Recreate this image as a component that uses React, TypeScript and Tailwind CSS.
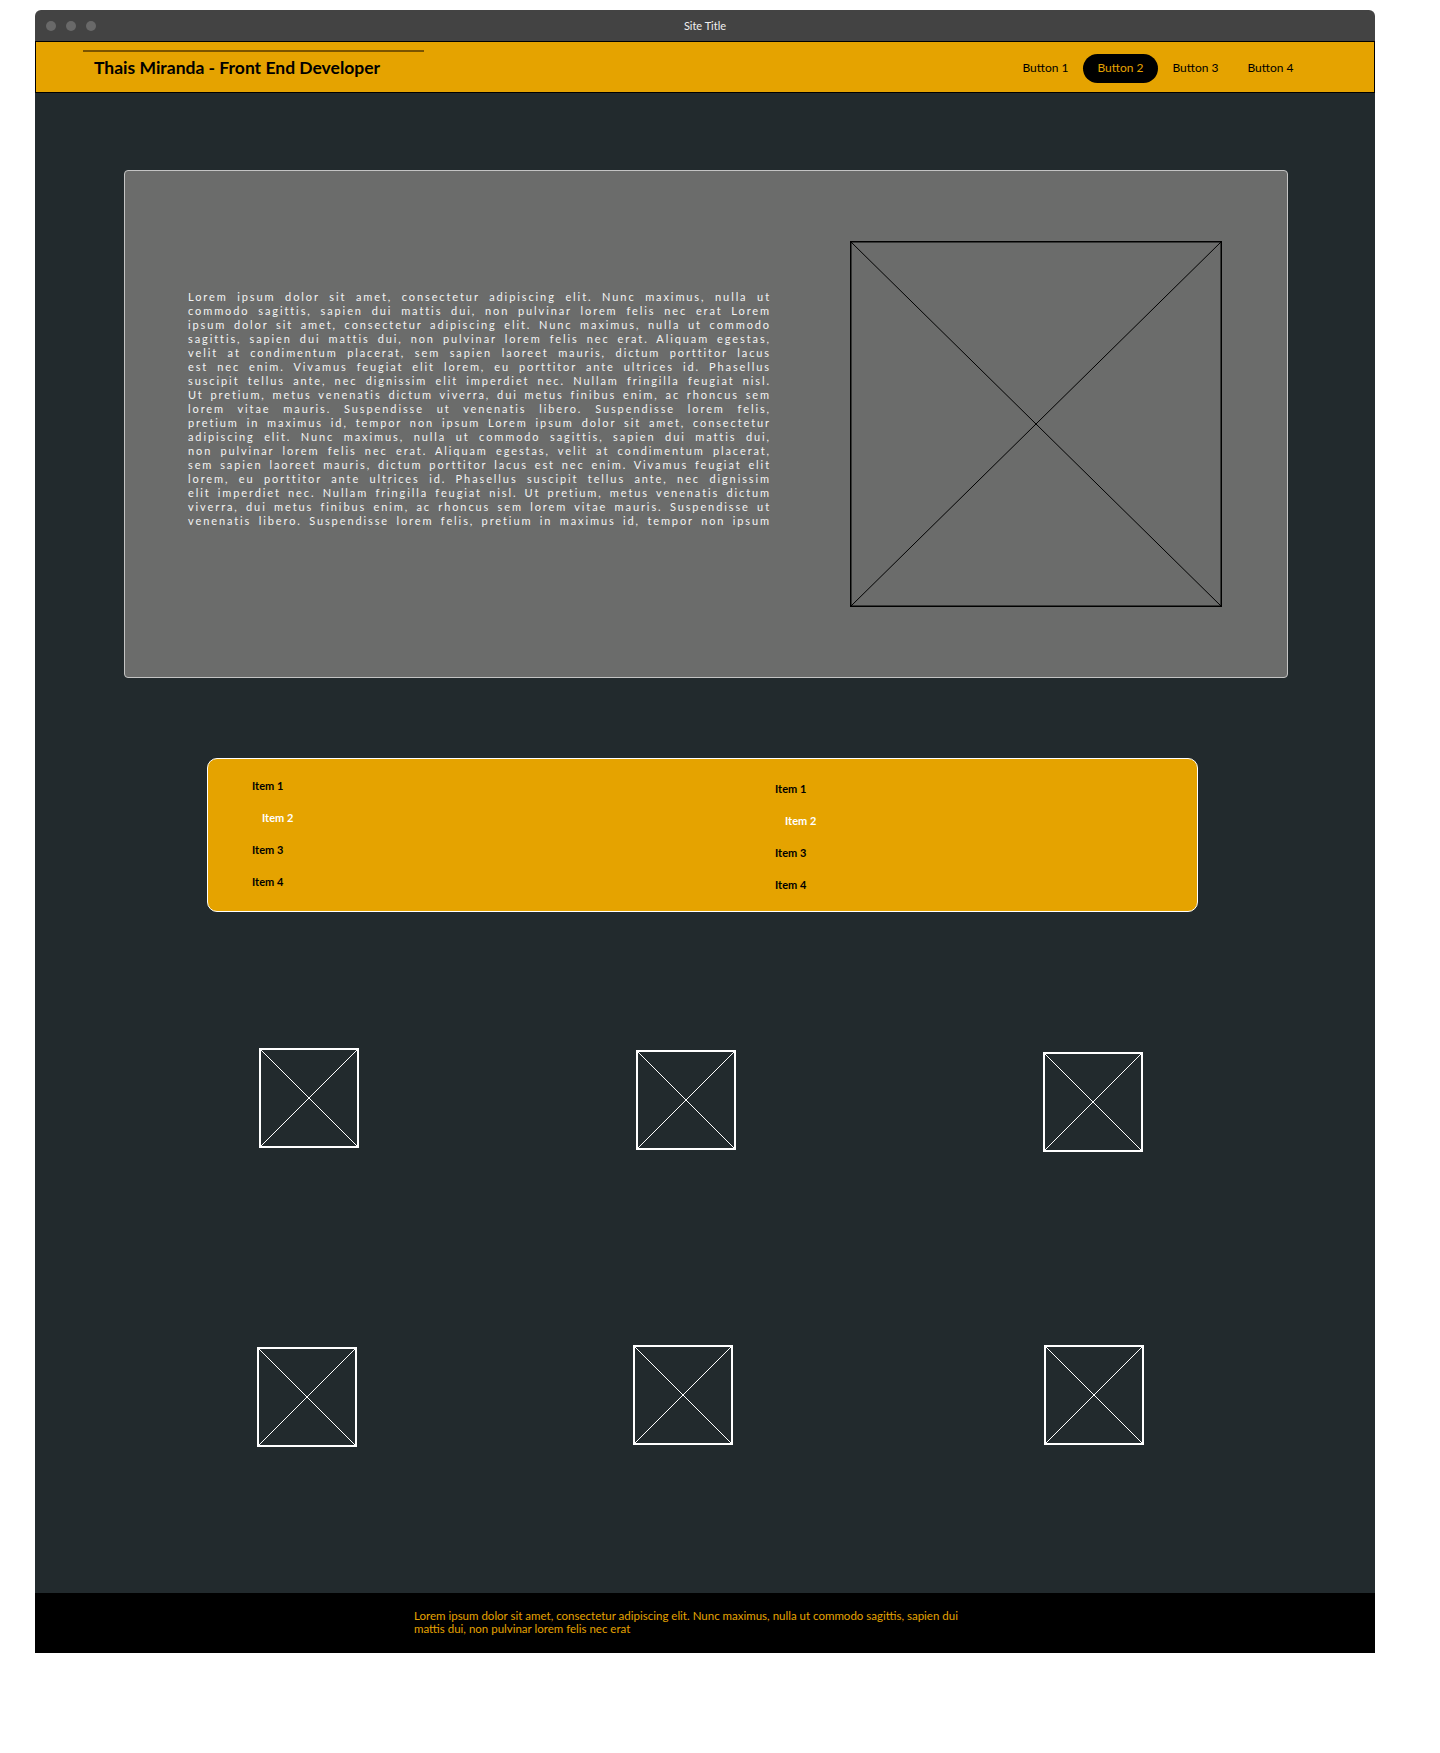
import React from 'react';

const heroLines = [
  "Lorem ipsum dolor sit amet, consectetur adipiscing elit. Nunc maximus, nulla ut",
  "commodo sagittis, sapien dui mattis dui, non pulvinar lorem felis nec erat Lorem",
  "ipsum dolor sit amet, consectetur adipiscing elit. Nunc maximus, nulla ut commodo",
  "sagittis, sapien dui mattis dui, non pulvinar lorem felis nec erat. Aliquam egestas,",
  "velit at condimentum placerat, sem sapien laoreet mauris, dictum porttitor lacus",
  "est nec enim. Vivamus feugiat elit lorem, eu porttitor ante ultrices id. Phasellus",
  "suscipit tellus ante, nec dignissim elit imperdiet nec. Nullam fringilla feugiat nisl.",
  "Ut pretium, metus venenatis dictum viverra, dui metus finibus enim, ac rhoncus sem",
  "lorem vitae mauris. Suspendisse ut venenatis libero. Suspendisse lorem felis,",
  "pretium in maximus id, tempor non ipsum Lorem ipsum dolor sit amet, consectetur",
  "adipiscing elit. Nunc maximus, nulla ut commodo sagittis, sapien dui mattis dui,",
  "non pulvinar lorem felis nec erat. Aliquam egestas, velit at condimentum placerat,",
  "sem sapien laoreet mauris, dictum porttitor lacus est nec enim. Vivamus feugiat elit",
  "lorem, eu porttitor ante ultrices id. Phasellus suscipit tellus ante, nec dignissim",
  "elit imperdiet nec. Nullam fringilla feugiat nisl. Ut pretium, metus venenatis dictum",
  "viverra, dui metus finibus enim, ac rhoncus sem lorem vitae mauris. Suspendisse ut",
  "venenatis libero. Suspendisse lorem felis, pretium in maximus id, tempor non ipsum",
];

const navButtons = ["Button 1", "Button 2", "Button 3", "Button 4"];
const items = ["Item 1", "Item 2", "Item 3", "Item 4"];

const Placeholder = ({ w, h, color, rectStroke, lineStroke }: { w: number; h: number; color: string; rectStroke: number; lineStroke: number }) => (
  <svg width={w} height={h} viewBox={`0 0 ${w} ${h}`} className="block shrink-0">
    <rect x={rectStroke / 2} y={rectStroke / 2} width={w - rectStroke} height={h - rectStroke} fill="none" stroke={color} strokeWidth={rectStroke} />
    <line x1={0} y1={0} x2={w} y2={h} stroke={color} strokeWidth={lineStroke} />
    <line x1={w} y1={0} x2={0} y2={h} stroke={color} strokeWidth={lineStroke} />
  </svg>
);

const ItemColumn = () => (
  <>
    {items.map((item, i) => (
      <div key={item} className={`h-[32px] flex items-center text-[11px] font-bold ${i === 1 ? 'pl-[10px] text-white' : 'text-black'}`}>
        {item}
      </div>
    ))}
  </>
);

const App = () => {
  return (
    <div className="bg-white min-h-[1753px] pt-[10px] pl-[35px] font-['Lato','Noto_Sans',sans-serif]">
      <div className="w-[1340px] rounded-t-[6px] overflow-hidden">
        {/* title bar */}
        <div className="h-[31px] bg-[#434343] grid grid-cols-[1fr_auto_1fr] items-center">
          <div className="flex items-center gap-[10px] pl-[11px]">
            <span className="w-[10px] h-[10px] rounded-full bg-[#696969]" />
            <span className="w-[10px] h-[10px] rounded-full bg-[#696969]" />
            <span className="w-[10px] h-[10px] rounded-full bg-[#696969]" />
          </div>
          <div className="text-[11px] text-[#f0f0f0] pt-[1px]">Site Title</div>
          <div />
        </div>

        {/* nav */}
        <div className="h-[52px] bg-[#e5a300] border border-black flex justify-between">
          <div className="pl-[47px] pt-[8px]">
            <div className="w-[341px] border-t-2 border-[#7a5400] pl-[11px] pt-[4px] text-[17.5px] leading-[24px] font-bold text-black">
              Thais Miranda - Front End Developer
            </div>
          </div>
          <div className="flex items-center pr-[66px] pt-[2px]">
            {navButtons.map((b, i) => (
              <button
                key={b}
                className={`w-[75px] h-[29px] rounded-full text-[12px] ${i === 1 ? 'bg-black text-[#e5a300]' : 'text-black'}`}
              >
                {b}
              </button>
            ))}
          </div>
        </div>

        {/* main */}
        <div className="h-[1500px] bg-[#222a2d] pt-[77px]">
          <div className="ml-[89px] w-[1164px] h-[508px] bg-[#6b6c6b] border border-[#c4c4c4] rounded-[4px] flex items-start">
            <div className="ml-[63px] mt-[119px] w-[583px] text-[11px] leading-[14px] tracking-[1.9px] text-[#f4f4f4]">
              {heroLines.map((line, i) => (
                <div key={i} className="text-justify [text-align-last:justify]">{line}</div>
              ))}
            </div>
            <div className="ml-auto mr-[65px] mt-[70px]">
              <Placeholder w={372} h={366} color="#000000" rectStroke={1.5} lineStroke={1} />
            </div>
          </div>

          <div className="mt-[80px] ml-[172px] w-[991px] h-[154px] bg-[#e5a300] border border-white rounded-[10px] flex">
            <div className="w-[567px] pl-[44px] pt-[11px]">
              <ItemColumn />
            </div>
            <div className="pt-[14px]">
              <ItemColumn />
            </div>
          </div>

          <div className="mt-[136px] h-[100px] flex items-start">
            <div className="ml-[224px]"><Placeholder w={100} h={100} color="#ffffff" rectStroke={2} lineStroke={1} /></div>
            <div className="ml-[277px] mt-[2px]"><Placeholder w={100} h={100} color="#ffffff" rectStroke={2} lineStroke={1} /></div>
            <div className="ml-[307px] mt-[4px]"><Placeholder w={100} h={100} color="#ffffff" rectStroke={2} lineStroke={1} /></div>
          </div>

          <div className="mt-[197px] h-[100px] flex items-start">
            <div className="ml-[222px] mt-[2px]"><Placeholder w={100} h={100} color="#ffffff" rectStroke={2} lineStroke={1} /></div>
            <div className="ml-[276px]"><Placeholder w={100} h={100} color="#ffffff" rectStroke={2} lineStroke={1} /></div>
            <div className="ml-[311px]"><Placeholder w={100} h={100} color="#ffffff" rectStroke={2} lineStroke={1} /></div>
          </div>
        </div>

        {/* footer */}
        <div className="h-[60px] bg-black pl-[379px] pt-[17px] text-[11.5px] leading-[12.6px] text-[#e5a300]">
          Lorem ipsum dolor sit amet, consectetur adipiscing elit. Nunc maximus, nulla ut commodo sagittis, sapien dui
          <br />
          mattis dui, non pulvinar lorem felis nec erat
        </div>
      </div>
    </div>
  );
};

export default App;
